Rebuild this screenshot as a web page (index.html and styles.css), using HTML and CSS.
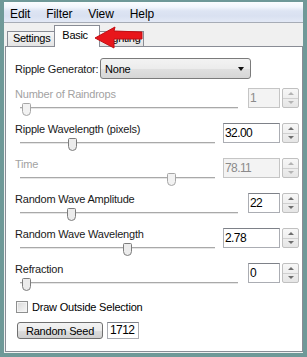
FILE: index.html
```html
<!DOCTYPE html>
<html>
<head>
<meta charset="utf-8">
<link rel="stylesheet" href="styles.css">
</head>
<body>
<div class="frame">
  <div class="client">
    <div class="menubar">
      <span>Edit</span><span>Filter</span><span>View</span><span>Help</span>
    </div>
    <div class="tabstrip">
      <div class="tab first">Settings</div>
      <div class="tab active">Basic</div>
      <div class="tab last">Lighting</div>
      <svg class="arrow" width="52" height="26" viewBox="0 0 52 26">
        <polygon points="3,13 23,2 22,6 50,7 50,14 22,14 22,23" fill="#e8161b" stroke="#c10d12" stroke-width="1" stroke-linejoin="round"/>
      </svg>
    </div>
    <div class="panel">
      <div class="gen-row">
        <span class="gen-label">Ripple Generator:</span>
        <div class="select"><span>None</span><span class="caret"></span></div>
      </div>

      <div class="param narrow disabled">
        <div class="pmain">
          <div class="plabel">Number of Raindrops</div>
          <div class="slider"><div class="track"></div>
            <svg class="thumb" style="left:2px" viewBox="0 0 9 13"><path d="M1.5 .5H7.5Q8.5 .5 8.5 1.5V8.5Q8.5 12.5 4.5 12.5Q.5 12.5 .5 8.5V1.5Q.5 .5 1.5 .5Z"/></svg>
          </div>
        </div>
        <div class="num">1</div>
        <div class="spin"><span class="up"></span><span class="down"></span></div>
      </div>

      <div class="param wide">
        <div class="pmain">
          <div class="plabel">Ripple Wavelength (pixels)</div>
          <div class="slider"><div class="track"></div>
            <svg class="thumb" style="left:48px" viewBox="0 0 9 13"><path d="M1.5 .5H7.5Q8.5 .5 8.5 1.5V8.5Q8.5 12.5 4.5 12.5Q.5 12.5 .5 8.5V1.5Q.5 .5 1.5 .5Z"/></svg>
          </div>
        </div>
        <div class="num">32.00</div>
        <div class="spin"><span class="up"></span><span class="down"></span></div>
      </div>

      <div class="param wide disabled time">
        <div class="pmain">
          <div class="plabel">Time</div>
          <div class="slider"><div class="track"></div>
            <svg class="thumb" style="left:147px" viewBox="0 0 9 13"><path d="M1.5 .5H7.5Q8.5 .5 8.5 1.5V8.5Q8.5 12.5 4.5 12.5Q.5 12.5 .5 8.5V1.5Q.5 .5 1.5 .5Z"/></svg>
          </div>
        </div>
        <div class="num">78.11</div>
        <div class="spin"><span class="up"></span><span class="down"></span></div>
      </div>

      <div class="param narrow">
        <div class="pmain">
          <div class="plabel">Random Wave Amplitude</div>
          <div class="slider"><div class="track"></div>
            <svg class="thumb" style="left:47px" viewBox="0 0 9 13"><path d="M1.5 .5H7.5Q8.5 .5 8.5 1.5V8.5Q8.5 12.5 4.5 12.5Q.5 12.5 .5 8.5V1.5Q.5 .5 1.5 .5Z"/></svg>
          </div>
        </div>
        <div class="num">22</div>
        <div class="spin"><span class="up"></span><span class="down"></span></div>
      </div>

      <div class="param wide">
        <div class="pmain">
          <div class="plabel">Random Wave Wavelength</div>
          <div class="slider"><div class="track"></div>
            <svg class="thumb" style="left:103px" viewBox="0 0 9 13"><path d="M1.5 .5H7.5Q8.5 .5 8.5 1.5V8.5Q8.5 12.5 4.5 12.5Q.5 12.5 .5 8.5V1.5Q.5 .5 1.5 .5Z"/></svg>
          </div>
        </div>
        <div class="num">2.78</div>
        <div class="spin"><span class="up"></span><span class="down"></span></div>
      </div>

      <div class="param narrow">
        <div class="pmain">
          <div class="plabel">Refraction</div>
          <div class="slider"><div class="track"></div>
            <svg class="thumb" style="left:2px" viewBox="0 0 9 13"><path d="M1.5 .5H7.5Q8.5 .5 8.5 1.5V8.5Q8.5 12.5 4.5 12.5Q.5 12.5 .5 8.5V1.5Q.5 .5 1.5 .5Z"/></svg>
          </div>
        </div>
        <div class="num">0</div>
        <div class="spin"><span class="up"></span><span class="down"></span></div>
      </div>

      <div class="check-row">
        <span class="checkbox"></span><span>Draw Outside Selection</span>
      </div>
      <div class="seed-row">
        <button class="btn">Random Seed</button>
        <div class="seed">1712</div>
      </div>
    </div>
  </div>
</div>
</body>
</html>
```
FILE: styles.css
```css
html, body {
  margin: 0;
  padding: 0;
}
body {
  font-family: "Liberation Sans", Arial, sans-serif;
  font-size: 11px;
  letter-spacing: -0.2px;
  color: #1a1a1a;
}
.frame {
  width: 307px;
  height: 357px;
  box-sizing: border-box;
  padding: 2px 4px 4px 4px;
  background: #6f9998;
  display: flex;
}
.client {
  flex: 1;
  background: #f0f0f0;
  display: flex;
  flex-direction: column;
}
.menubar {
  height: 21px;
  box-sizing: border-box;
  padding: 3px 0 0 6px;
  border-bottom: 1px solid #a7acb6;
  background: linear-gradient(#fbfdff 0%, #f2f6fc 25%, #dde4f3 45%, #d9e1f1 70%, #e3e9f6 100%);
  display: flex;
  align-items: center;
  gap: 16px;
  font-size: 12px;
  letter-spacing: -0.1px;
  color: #000;
}
.tabstrip {
  position: relative;
  height: 23px;
  padding-left: 3px;
  display: flex;
  align-items: flex-end;
}
.tab {
  box-sizing: border-box;
  height: 15px;
  border: 1px solid #898c95;
  border-bottom: none;
  background: linear-gradient(#f6f6f6, #e4e4e4);
  line-height: 13px;
  padding: 0 5px;
  color: #000;
  letter-spacing: -0.3px;
}
.tab.active {
  position: relative;
  z-index: 1;
  height: 22px;
  width: 46px;
  margin: 0 -1px -1px -2px;
  padding: 0 0 0 7px;
  line-height: 18px;
  background: #fff;
}
.tab.last {
  padding: 0 2px 0 4px;
}
.arrow {
  position: absolute;
  left: 88px;
  top: 2px;
  z-index: 2;
  overflow: visible;
}
.panel {
  flex: 1;
  margin: 0 0 1px 1px;
  background: #fff;
  border: 1px solid #898c95;
  padding: 11px 3px 0 8px;
  display: flex;
  flex-direction: column;
}
.gen-row {
  display: flex;
  align-items: center;
  height: 21px;
  flex: none;
}
.gen-label {
  width: 86px;
  flex: none;
  padding-left: 1px;
  box-sizing: border-box;
}
.select {
  width: 151px;
  height: 21px;
  box-sizing: border-box;
  border: 1px solid #7b7b7b;
  border-radius: 3px;
  background: linear-gradient(#f3f3f3 0%, #ececec 50%, #e0e0e0 52%, #d6d6d6 100%);
  display: flex;
  align-items: center;
  padding-left: 4px;
  color: #000;
}
.caret {
  margin-left: auto;
  margin-right: 6px;
  width: 0;
  height: 0;
  border-left: 3.5px solid transparent;
  border-right: 3.5px solid transparent;
  border-top: 4px solid #111;
}
.param {
  flex: none;
  height: 35px;
  display: flex;
  align-items: flex-start;
}
.gen-row + .param {
  margin-top: 8px;
}
.pmain {
  flex: 1;
}
.plabel {
  height: 14px;
  line-height: 14px;
  padding-left: 1px;
}
.disabled .plabel {
  color: #a2a2a2;
}
.slider {
  position: relative;
  height: 16px;
  margin-left: 6px;
  margin-right: 10px;
}
.wide .slider {
  margin-right: 8px;
}
.track {
  position: absolute;
  left: 0;
  right: 0;
  top: 6px;
  height: 1px;
  background: #a9a9a9;
  box-shadow: 0 1px 0 #e6e6e6;
}
.thumb {
  position: absolute;
  top: 2px;
  width: 9px;
  height: 13px;
}
.thumb path {
  fill: #ececec;
  stroke: #7d7d7d;
  stroke-width: 1;
}
.disabled .thumb path {
  fill: #f2f2f2;
  stroke: #a6a6a6;
}
.num {
  box-sizing: border-box;
  height: 20px;
  margin-top: 1px;
  border: 1px solid #abadb3;
  border-top-color: #7e8188;
  background: #fff;
  line-height: 18px;
  padding-left: 1px;
  font-size: 12px;
  letter-spacing: -0.6px;
  color: #000;
}
.narrow .num {
  width: 32px;
}
.wide .num {
  width: 57px;
}
.disabled .num {
  background: #f3f3f3;
  border-color: #c5c5c5;
  color: #8a8a8a;
}
.spin {
  box-sizing: border-box;
  width: 17px;
  height: 20px;
  margin: 1px 0 0 2px;
  border: 1px solid #c0c0c0;
  border-radius: 2px;
  display: flex;
  flex-direction: column;
  background: linear-gradient(#f7f7f7, #e6e6e6);
}
.spin span {
  flex: 1;
  display: flex;
  align-items: center;
  justify-content: center;
}
.spin .up {
  border-bottom: 1px solid #d0d0d0;
}
.spin .up::before {
  content: "";
  border-left: 3px solid transparent;
  border-right: 3px solid transparent;
  border-bottom: 3px solid #6e6e6e;
}
.spin .down::before {
  content: "";
  border-left: 3px solid transparent;
  border-right: 3px solid transparent;
  border-top: 3px solid #6e6e6e;
}
.disabled .spin .up::before {
  border-bottom-color: #b3b3b3;
}
.disabled .spin .down::before {
  border-top-color: #b3b3b3;
}
.check-row {
  flex: none;
  display: flex;
  align-items: center;
  height: 14px;
  margin: 3px 0 0 2px;
  gap: 4px;
  color: #000;
}
.checkbox {
  box-sizing: border-box;
  width: 12px;
  height: 12px;
  border: 1px solid #8e8f8f;
  background: linear-gradient(135deg, #d8d8d8, #f8f8f8);
  box-shadow: inset 0 0 0 1px #f4f4f4;
}
.seed-row {
  flex: none;
  display: flex;
  align-items: center;
  height: 17px;
  margin: 8px 0 0 3px;
  gap: 4px;
}
.btn {
  box-sizing: border-box;
  width: 86px;
  height: 17px;
  margin: 0;
  padding: 0;
  border: 1px solid #707070;
  border-radius: 3px;
  background: linear-gradient(#f3f3f3 0%, #ebebeb 50%, #dddddd 52%, #d0d0d0 100%);
  font: inherit;
  letter-spacing: inherit;
  color: #000;
}
.seed {
  box-sizing: border-box;
  width: 32px;
  height: 17px;
  border: 1px solid #abadb3;
  border-top-color: #7e8188;
  line-height: 15px;
  padding-left: 2px;
  font-size: 12px;
  letter-spacing: -0.6px;
  color: #000;
}
```
